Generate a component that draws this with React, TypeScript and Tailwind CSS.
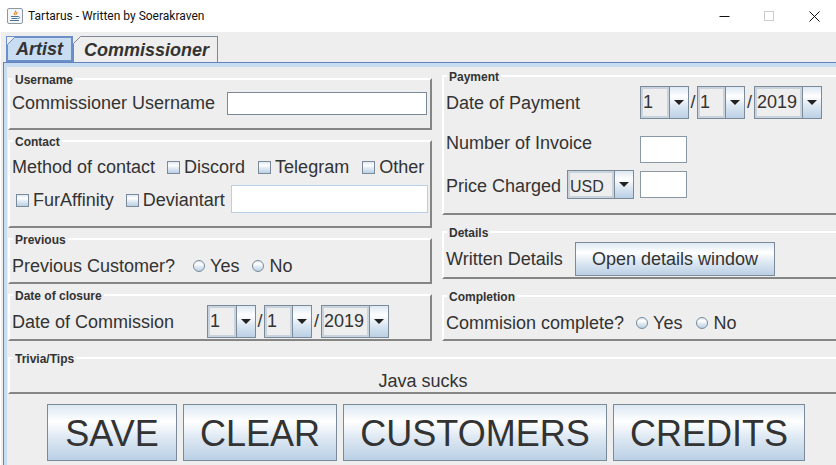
// Tartarus: Swing "Ocean" look form, Artist tab
import type { ReactNode } from 'react';

const GRADIENT = 'bg-[linear-gradient(#dde8f3,#ffffff_30%,#dde8f3_60%,#bbd0e5)]';

function JavaIcon() {
  return (
    <svg width="16" height="16" viewBox="0 0 16 16">
      <rect x="0.5" y="0.5" width="15" height="15" rx="1.5" fill="#f4f6f8" stroke="#8b98a6" />
      <path d="M8.5 2.5c1 1.5-2 2.5-1 4.5M10 4c0 1.5-1.5 2-1 3" fill="none" stroke="#e8872c" strokeWidth="1.2" />
      <path d="M4 8.5h7M4.5 10.5h6M3 12.5h9M11 8.5c2 0 2 2 0 2" fill="none" stroke="#4a7396" strokeWidth="1" />
    </svg>
  );
}

function WindowControls() {
  return (
    <div className="-mr-px flex h-full">
      <div className="flex w-[45px] items-center justify-center">
        <svg width="11" height="11" viewBox="0 0 11 11"><path d="M0.5 5.5h10" stroke="#111" /></svg>
      </div>
      <div className="flex w-[45px] items-center justify-center">
        <svg width="11" height="11" viewBox="0 0 11 11"><rect x="0.5" y="0.5" width="9" height="9" fill="none" stroke="#cccccc" /></svg>
      </div>
      <div className="flex w-[45px] items-center justify-center">
        <svg width="11" height="11" viewBox="0 0 11 11"><path d="M0.5 0.5l10 10M10.5 0.5l-10 10" stroke="#111" /></svg>
      </div>
    </div>
  );
}

function TabCorner({ color }: { color: string }) {
  return (
    <svg className="absolute -left-px -top-px" width="8" height="8" viewBox="0 0 8 8">
      <path d="M0 0h8L0 8z" fill="#eeeeee" />
      <path d="M0.5 7.5l7-7" stroke={color} />
    </svg>
  );
}

function Group({ title, className, children }: { title: string; className: string; children: ReactNode }) {
  return (
    <div className={`relative border-2 border-b-[#858585] border-l-white border-r-[#858585] border-t-white ${className}`}>
      <span className="absolute left-[3px] top-[-7px] bg-[#eeeeee] px-[2px] text-[12px] font-bold leading-[14px]">{title}</span>
      {children}
    </div>
  );
}

function Combo({ value, width, small = false }: { value: string; width: string; small?: boolean }) {
  return (
    <div className={`flex border border-[#7a8a99] ${width}`}>
      <div className={`min-w-0 flex-1 border-2 border-[#c8d3de] bg-[#eeeeee] leading-[27px] ${small ? 'text-[16px]' : 'text-[18px]'}`}>{value}</div>
      <div className={`flex w-[19px] shrink-0 items-center justify-center border-l border-[#7a8a99] ${GRADIENT}`}>
        <svg width="10" height="5" viewBox="0 0 10 5"><path d="M0 0h10L5 5z" fill="#222222" /></svg>
      </div>
    </div>
  );
}

function DateCombos() {
  return (
    <div className="flex h-[33px]">
      <Combo value="1" width="w-[49px]" />
      <span className="w-[8px] text-center leading-[33px]">/</span>
      <Combo value="1" width="w-[48px]" />
      <span className="w-[9px] text-center leading-[33px]">/</span>
      <Combo value="2019" width="w-[68px]" />
    </div>
  );
}

function Check({ label, className = '' }: { label: string; className?: string }) {
  return (
    <span className={`flex items-center gap-[4px] ${className}`}>
      <span className={`h-[13px] w-[13px] border border-[#7a8a99] ${GRADIENT}`} />
      {label}
    </span>
  );
}

function Radio({ label, className = '' }: { label: string; className?: string }) {
  return (
    <span className={`flex items-center gap-[5px] ${className}`}>
      <span className={`h-[12px] w-[12px] rounded-full border border-[#7a8a99] ${GRADIENT}`} />
      {label}
    </span>
  );
}

function BigButton({ label, width }: { label: string; width: string }) {
  return (
    <button className={`h-[57px] border border-[#7a8a99] pt-[2px] text-[36px] leading-none text-[#333333] ${GRADIENT} ${width}`}>
      {label}
    </button>
  );
}

export default function App() {
  return (
    <div className="flex h-[465px] w-[836px] flex-col overflow-hidden bg-white text-[18px] leading-6 text-[#333333] [font-family:'Liberation_Sans',sans-serif]">
      <div className="flex h-8 shrink-0 items-center justify-between pl-[7px]">
        <div className="flex items-center gap-[5px]">
          <JavaIcon />
          <span className="text-[12px] text-[#111111] [font-family:Roboto,sans-serif]">Tartarus - Written by Soerakraven</span>
        </div>
        <WindowControls />
      </div>

      <div className="ml-px flex min-h-0 flex-1 flex-col bg-[#eeeeee]">
        <div className="flex h-[30px] shrink-0 pl-[5px] pt-1 text-[18px] font-bold italic">
          <div className="relative z-10 flex h-[26px] w-[67px] items-center justify-center border-2 border-[#6c8fc9] bg-[#c8ddf2]">
            <TabCorner color="#6c8fc9" />
            Artist
          </div>
          <div className="relative flex h-[26px] w-[145px] items-center justify-center border border-b-0 border-[#7a8a99] pl-[2px]">
            <TabCorner color="#7a8a99" />
            Commissioner
          </div>
        </div>

        <div className="ml-[2px] flex min-h-0 flex-1 flex-col border-l border-t border-[#6382bf]">
          <div className="flex min-h-0 flex-1 flex-col border-l-[3px] border-t-[4px] border-[#c8ddf2] bg-[#eeeeee]">
            <div className="flex pl-[1px]">
              <div className="flex w-[424px] shrink-0 flex-col pt-[11px]">
                <Group title="Username" className="h-[52px] pl-[2px] pt-[11px]">
                  <div className="flex items-center">
                    <span className="w-[215px]">Commissioner Username</span>
                    <div className="h-[23px] w-[200px] border border-[#7a8a99] bg-white" />
                  </div>
                </Group>
                <Group title="Contact" className="mt-[10px] h-[88px] pl-[2px] pt-[13px]">
                  <div className="flex h-6 items-center">
                    <span>Method of contact</span>
                    <Check label="Discord" className="ml-[12px]" />
                    <Check label="Telegram" className="ml-[13px]" />
                    <Check label="Other" className="ml-[13px]" />
                  </div>
                  <div className="mt-[6px] flex h-[28px] items-center pl-[4px]">
                    <Check label="FurAffinity" className="pt-[2px]" />
                    <Check label="Deviantart" className="ml-[12px] pt-[2px]" />
                    <div className="ml-[6px] h-[28px] w-[197px] border border-[#b8cfe5] bg-white" />
                  </div>
                </Group>
                <Group title="Previous" className="mt-[10px] h-[46px] pl-[2px] pt-[14px]">
                  <div className="flex h-6 items-center">
                    <span>Previous Customer?</span>
                    <Radio label="Yes" className="ml-[18px]" />
                    <Radio label="No" className="ml-[13px]" />
                  </div>
                </Group>
                <Group title="Date of closure" className="mt-[10px] h-[47px] pl-[2px] pt-[9px]">
                  <div className="flex items-center">
                    <span className="w-[195px]">Date of Commission</span>
                    <DateCombos />
                  </div>
                </Group>
              </div>

              <div className="ml-[10px] flex w-[400px] shrink-0 flex-col pt-[8px]">
                <Group title="Payment" className="h-[140px] pl-[2px] pt-[9px]">
                  <div className="flex items-center">
                    <span className="w-[194px]">Date of Payment</span>
                    <DateCombos />
                  </div>
                  <div className="mt-[17px] flex">
                    <span className="-mt-[5px] w-[194px]">Number of Invoice</span>
                    <div className="h-[27px] w-[47px] border border-[#8a98a6] bg-white" />
                  </div>
                  <div className="mt-[7px] flex items-center">
                    <span className="w-[121px] pt-[2px]">Price Charged</span>
                    <div className="flex h-[29px]"><Combo value="USD" width="w-[67px]" small /></div>
                    <div className="ml-[6px] h-[27px] w-[47px] border border-[#8a98a6] bg-white" />
                  </div>
                </Group>
                <Group title="Details" className="mt-[16px] h-[48px] pl-[2px] pt-[9px]">
                  <div className="flex items-center">
                    <span className="w-[129px]">Written Details</span>
                    <button className={`h-[34px] w-[200px] border border-[#7a8a99] text-[18px] text-[#333333] ${GRADIENT}`}>
                      Open details window
                    </button>
                  </div>
                </Group>
                <Group title="Completion" className="mt-[16px] h-[46px] pl-[2px] pt-[14px]">
                  <div className="flex h-6 items-center">
                    <span>Commision complete?</span>
                    <Radio label="Yes" className="ml-[12px]" />
                    <Radio label="No" className="ml-[14px]" />
                  </div>
                </Group>
              </div>
            </div>

            <Group title="Trivia/Tips" className="ml-[1px] mt-[16px] h-[37px] w-[830px] shrink-0 pt-[10px] text-center">
              Java sucks
            </Group>

            <div className="ml-[40px] mt-[10px] flex gap-[6px]">
              <BigButton label="SAVE" width="w-[130px]" />
              <BigButton label="CLEAR" width="w-[154px]" />
              <BigButton label="CUSTOMERS" width="w-[264px]" />
              <BigButton label="CREDITS" width="w-[192px]" />
            </div>
          </div>
        </div>
      </div>
    </div>
  );
}
